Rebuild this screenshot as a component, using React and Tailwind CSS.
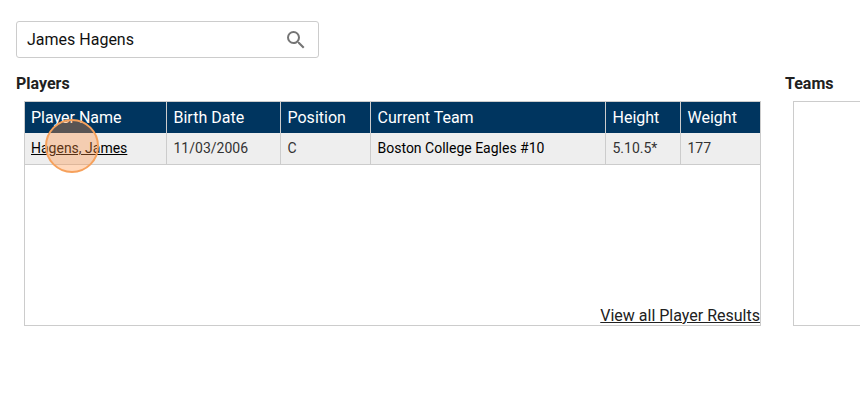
import React, { useState } from 'react';
import { MdSearch } from 'react-icons/md';

const columns = [
  { label: 'Player Name', width: 'w-[141px]' },
  { label: 'Birth Date', width: 'w-[114px]' },
  { label: 'Position', width: 'w-[90px]' },
  { label: 'Current Team', width: '' },
  { label: 'Height', width: 'w-[75px]' },
  { label: 'Weight', width: 'w-[80px]' },
];

const players = [
  {
    name: 'Hagens, James',
    birthDate: '11/03/2006',
    position: 'C',
    team: 'Boston College Eagles #10',
    height: '5.10.5*',
    weight: '177',
  },
];

function SearchBox() {
  const [query, setQuery] = useState('James Hagens');

  return (
    <form
      className="flex items-center w-[303px] h-[37px] bg-white border border-[#cccccc] rounded-[3px]"
      onSubmit={(event) => event.preventDefault()}
    >
      <input
        type="text"
        aria-label="Search players and teams"
        className="grow min-w-0 pl-[10px] text-base text-[#111111] outline-none"
        value={query}
        onChange={(event) => setQuery(event.target.value)}
      />
      <button type="submit" aria-label="Search" className="mr-2.5 text-[#757575]">
        <MdSearch size={24} />
      </button>
    </form>
  );
}

function PlayersTable() {
  return (
    <table className="w-full table-fixed border-collapse text-left">
      <thead>
        <tr className="h-[31px] bg-[#00355f] text-white">
          {columns.map((column) => (
            <th
              key={column.label}
              scope="col"
              className={`${column.width} px-[7px] first:pl-1.5 py-0 text-base leading-5 font-normal border-r border-[#cccccc] last:border-r-0`}
            >
              {column.label}
            </th>
          ))}
        </tr>
      </thead>
      <tbody>
        {players.map((player) => (
          <tr
            key={player.name}
            className="h-[31px] bg-[#eeeeee] text-sm text-[#333333] border-b border-[#cccccc] [&>td]:px-[7px] [&>td:first-child]:pl-1.5 [&>td]:border-r [&>td]:border-[#cccccc] [&>td:last-child]:border-r-0"
          >
            <td>
              {/* Click marker sits over the player link */}
              <span className="relative">
                <a href="#player" className="text-black underline">{player.name}</a>
                <span className="absolute left-[14px] -top-[21px] size-[54px] rounded-full border-2 border-[#f6a15c] bg-[#ff9040]/35 pointer-events-none" />
              </span>
            </td>
            <td>{player.birthDate}</td>
            <td>{player.position}</td>
            <td className="text-black">{player.team}</td>
            <td>{player.height}</td>
            <td>{player.weight}</td>
          </tr>
        ))}
      </tbody>
    </table>
  );
}

function App() {
  return (
    <div className="pt-[21px] pl-4 bg-white font-['Roboto',sans-serif] text-[#212121] overflow-hidden">
      <SearchBox />

      <div className="flex gap-6 pt-3.5">
        <section className="grow min-w-0">
          <h2 className="mb-[5px] text-base font-bold">Players</h2>
          <div className="ml-2 flex flex-col min-h-[225px] border border-[#cccccc]">
            <PlayersTable />
            <a href="#results" className="mt-auto self-end text-base leading-[18px] underline">
              View all Player Results
            </a>
          </div>
        </section>

        <section className="flex flex-col w-[75px] shrink-0">
          <h2 className="mb-[5px] text-base font-bold">Teams</h2>
          <div className="ml-2 grow border border-r-0 border-[#cccccc]" />
        </section>
      </div>
    </div>
  );
}

export default App;
